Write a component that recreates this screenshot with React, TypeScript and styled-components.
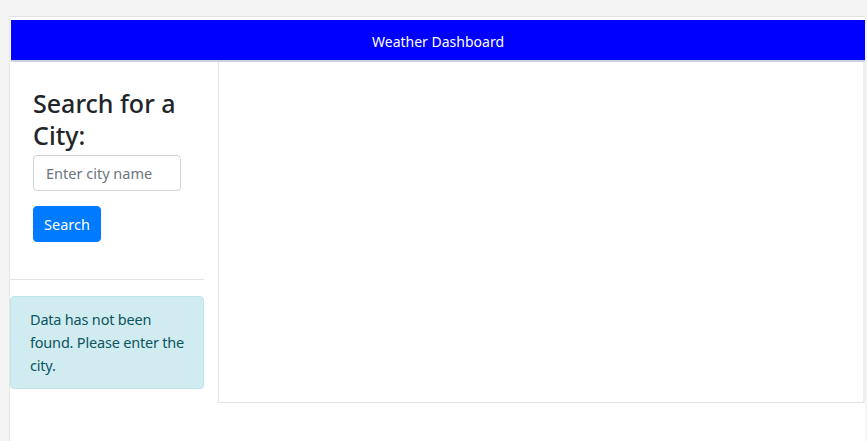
import React from "react";
import styled, { createGlobalStyle } from "styled-components";

const Global = createGlobalStyle`
  html, body { margin: 0; padding: 0; }
  body {
    background: #f4f4f4;
    font-family: "Noto Sans", "Open Sans", sans-serif;
    color: #212529;
  }
  * { box-sizing: border-box; }
`;

const Page = styled.div`
  padding: 16px 2px 0 9px;
  height: 441px;
  overflow: hidden;
`;

const Frame = styled.div`
  background: #fff;
  border-top: 1px solid #e2e2e2;
  border-left: 1px solid #e6e6e6;
  height: 100%;
  padding: 3px 0 0 1px;
  display: flex;
  flex-direction: column;
`;

const Header = styled.header`
  height: 42px;
  padding-top: 3px;
  background: #0000ff;
  color: #fff;
  display: flex;
  align-items: center;
  justify-content: center;
  font-size: 14px;
  border-bottom: 2px solid #c9d0e6;
`;

const Main = styled.div`
  display: flex;
  align-items: flex-start;
  margin-left: -1px;
`;

const Sidebar = styled.aside`
  width: 208px;
  flex: none;
`;

const SearchBox = styled.div`
  padding: 25px 23px 0 23px;
`;

const Heading = styled.h3`
  margin: 0 0 4px;
  font-size: 25px;
  font-weight: 500;
  line-height: 32px;
  color: #212529;
`;

const Input = styled.input`
  display: block;
  width: 148px;
  height: 36px;
  padding: 6px 12px;
  font-family: inherit;
  font-size: 14.5px;
  border: 1px solid #ced4da;
  border-radius: 4px;
  color: #495057;
  &::placeholder { color: #6c757d; }
`;

const Button = styled.button`
  margin-top: 15px;
  height: 36px;
  width: 68px;
  border: 1px solid #007bff;
  background: #007bff;
  color: #fff;
  font-family: inherit;
  font-size: 14.5px;
  border-radius: 4px;
  padding: 0;
`;

const Rule = styled.hr`
  margin: 37px 14px 16px 0;
  border: 0;
  border-top: 1px solid rgba(0, 0, 0, 0.1);
`;

const Alert = styled.div`
  margin-right: 14px;
  padding: 11px 12px 11px 19px;
  background: #d1ecf1;
  border: 1px solid #bee5eb;
  border-radius: 4px;
  color: #0c5460;
  font-size: 14.5px;
  letter-spacing: -0.2px;
  line-height: 23px;
`;

const Results = styled.section`
  flex: 1;
  height: 341px;
  border-left: 1px solid #e3e3e3;
  border-bottom: 1px solid #e3e3e3;
  border-right: 2px solid #eeeeee;
`;

export default function App() {
  return (
    <>
      <Global />
      <Page>
        <Frame>
          <Header>Weather Dashboard</Header>
          <Main>
            <Sidebar>
              <SearchBox>
                <Heading>Search for a City:</Heading>
                <Input placeholder="Enter city name" />
                <Button>Search</Button>
              </SearchBox>
              <Rule />
              <Alert>Data has not been found. Please enter the city.</Alert>
            </Sidebar>
            <Results />
          </Main>
        </Frame>
      </Page>
    </>
  );
}
